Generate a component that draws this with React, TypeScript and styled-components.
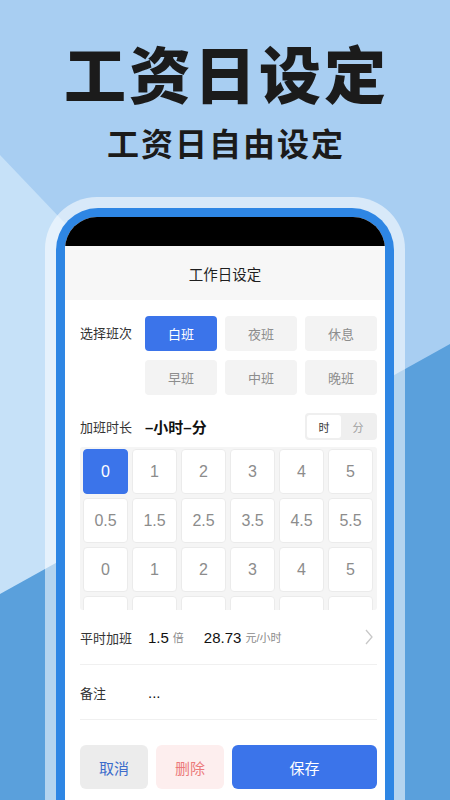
import React, { useState } from 'react';
import styled, { createGlobalStyle } from 'styled-components';

const GlobalStyle = createGlobalStyle`
    html, body {
        margin: 0;
        padding: 0;
    }
    body {
        font-family: "Liberation Sans", "Noto Sans CJK SC", "Noto Sans", sans-serif;
        color: #222;
    }
`;

const BLUE = '#3b74ea';

const Page = styled.div`
    position: relative;
    width: 450px;
    height: 800px;
    overflow: hidden;
    background: #a8cef2;
    display: flex;
    flex-direction: column;
    align-items: center;
`;

const Backdrop = styled.svg`
    position: absolute;
    inset: 0;
`;

const Headline = styled.h1`
    position: relative;
    margin: 40px 0 0 3px;
    font-family: "Noto Sans CJK SC", sans-serif;
    font-size: 62px;
    line-height: 64px;
    font-weight: 900;
    letter-spacing: 3px;
    color: #1b1b1b;
`;

const Tagline = styled.h2`
    position: relative;
    margin: 20px 0 0 2px;
    font-family: "Noto Sans CJK SC", sans-serif;
    font-size: 32px;
    line-height: 36px;
    font-weight: 700;
    letter-spacing: 2px;
    color: #1b1b1b;
`;

const Frame = styled.div`
    position: relative;
    margin-top: 37px;
    width: 360px;
    flex: 1;
    padding: 11px 11px 0;
    box-sizing: border-box;
    background: rgba(255, 255, 255, 0.55);
    border-radius: 52px 52px 0 0;
    display: flex;
`;

const Bezel = styled.div`
    flex: 1;
    min-width: 0;
    padding: 9px 9px 0;
    background: #2e86e4;
    border-radius: 42px 42px 0 0;
    display: flex;
`;

const Screen = styled.div`
    flex: 1;
    min-width: 0;
    background: #fff;
    border-radius: 32px 32px 0 0;
    overflow: hidden;
    display: flex;
    flex-direction: column;
`;

const StatusBar = styled.div`
    height: 29px;
    background: #000;
`;

const NavBar = styled.div`
    height: 54px;
    background: #f7f7f7;
    display: flex;
    align-items: center;
    justify-content: center;
    font-family: "Noto Sans CJK SC", sans-serif;
    font-size: 14.5px;
    color: #1f1f1f;
`;

const Body = styled.div`
    padding: 16px 8px 0 15px;
    display: flex;
    flex-direction: column;
`;

const Label = styled.span<{ $width?: number }>`
    width: ${p => p.$width ?? 65}px;
    flex-shrink: 0;
    font-size: 13px;
    color: #333;
`;

const ShiftGrid = styled.div`
    display: grid;
    grid-template-columns: 57px repeat(3, 72px);
    grid-auto-rows: 35px;
    column-gap: 8px;
    row-gap: 9px;
`;

const ShiftLabel = styled.span`
    grid-row: 1 / 3;
    font-size: 13px;
    line-height: 35px;
    color: #333;
    white-space: nowrap;
`;

const ShiftButton = styled.button<{ $active?: boolean }>`
    border: 0;
    border-radius: 4px;
    padding: 0;
    background: ${p => (p.$active ? BLUE : '#f3f3f3')};
    color: ${p => (p.$active ? '#fff' : '#8d8d8d')};
    font-family: inherit;
    font-size: 13px;
`;

const OvertimeHead = styled.div`
    margin-top: 18px;
    height: 27px;
    display: flex;
    align-items: center;
`;

const Duration = styled.span`
    font-size: 15px;
    font-weight: 700;
    color: #111;
`;

const UnitToggle = styled.div`
    margin-left: auto;
    width: 72px;
    height: 27px;
    padding: 2px;
    box-sizing: border-box;
    border-radius: 4px;
    background: #efefef;
    display: flex;
`;

const UnitOption = styled.span<{ $active?: boolean }>`
    flex: 1;
    display: flex;
    align-items: center;
    justify-content: center;
    border-radius: 3px;
    background: ${p => (p.$active ? '#fff' : 'transparent')};
    color: ${p => (p.$active ? '#333' : '#a0a0a0')};
    font-size: 11px;
`;

const HourGrid = styled.div`
    margin-top: 7px;
    height: 161px;
    overflow: hidden;
    padding: 2px 4px 0 3px;
    background: #f5f5f5;
    border-radius: 3px;
    display: grid;
    grid-template-columns: repeat(6, 45px);
    grid-auto-rows: 45px;
    gap: 4px;
`;

const HourCell = styled.div<{ $active?: boolean }>`
    box-sizing: border-box;
    border: 1px solid ${p => (p.$active ? BLUE : '#ebebeb')};
    border-radius: 4px;
    background: ${p => (p.$active ? BLUE : '#fff')};
    color: ${p => (p.$active ? '#fff' : '#8c8c8c')};
    display: flex;
    align-items: center;
    justify-content: center;
    font-size: 16px;
`;

const InfoRow = styled.div`
    height: 54px;
    display: flex;
    align-items: center;
    border-bottom: 1px solid #f0f0f0;
`;

const Figure = styled.span`
    font-size: 15px;
    font-weight: 500;
    color: #111;
`;

const Unit = styled.span<{ $gap?: number }>`
    margin: 0 ${p => p.$gap ?? 0}px 0 4px;
    font-size: 11px;
    color: #8a8a8a;
`;

const Chevron = styled.svg`
    margin: 0 4px 0 auto;
`;

const Actions = styled.div`
    margin-top: 25px;
    height: 44px;
    display: flex;
    gap: 8px;
`;

const ActionButton = styled.button<{ $tone: 'plain' | 'danger' | 'primary' }>`
    width: ${p => (p.$tone === 'primary' ? 'auto' : '68px')};
    flex: ${p => (p.$tone === 'primary' ? 1 : 'none')};
    border: 0;
    border-radius: 6px;
    font-family: inherit;
    font-size: 15px;
    background: ${p =>
        p.$tone === 'primary' ? BLUE : p.$tone === 'danger' ? '#fdeeee' : '#ececec'};
    color: ${p =>
        p.$tone === 'primary' ? '#fff' : p.$tone === 'danger' ? '#ec7a7a' : '#3d6ccb'};
`;

const SHIFTS = ['白班', '夜班', '休息', '早班', '中班', '晚班'];
const HOURS = ['0', '1', '2', '3', '4', '5', '0.5', '1.5', '2.5', '3.5', '4.5', '5.5'];

export default function App() {
    const [shift, setShift] = useState('白班');
    const [unit, setUnit] = useState<'h' | 'm'>('h');
    const cells = [...HOURS, ...HOURS.slice(0, 6), '', '', '', '', '', ''];

    return (
        <>
            <GlobalStyle />
            <Page>
                <Backdrop width="450" height="800" viewBox="0 0 450 800">
                    <polygon points="0,155 300,470 0,640" fill="#c6e1f8" />
                    <polygon points="0,594 450,344 450,800 0,800" fill="#5aa0dc" />
                </Backdrop>

                <Headline>工资日设定</Headline>
                <Tagline>工资日自由设定</Tagline>

                <Frame>
                    <Bezel>
                        <Screen>
                            <StatusBar />
                            <NavBar>工作日设定</NavBar>
                            <Body>
                                <ShiftGrid>
                                    <ShiftLabel>选择班次</ShiftLabel>
                                    {SHIFTS.map(s => (
                                        <ShiftButton
                                            key={s}
                                            $active={s === shift}
                                            onClick={() => setShift(s)}
                                        >
                                            {s}
                                        </ShiftButton>
                                    ))}
                                </ShiftGrid>

                                <OvertimeHead>
                                    <Label>加班时长</Label>
                                    <Duration>–小时–分</Duration>
                                    <UnitToggle>
                                        <UnitOption $active={unit === 'h'} onClick={() => setUnit('h')}>
                                            时
                                        </UnitOption>
                                        <UnitOption $active={unit === 'm'} onClick={() => setUnit('m')}>
                                            分
                                        </UnitOption>
                                    </UnitToggle>
                                </OvertimeHead>

                                <HourGrid>
                                    {cells.map((v, i) => (
                                        <HourCell key={i} $active={i === 0}>
                                            {v}
                                        </HourCell>
                                    ))}
                                </HourGrid>

                                <InfoRow>
                                    <Label $width={68}>平时加班</Label>
                                    <Figure>1.5</Figure>
                                    <Unit $gap={20}>倍</Unit>
                                    <Figure>28.73</Figure>
                                    <Unit>元/小时</Unit>
                                    <Chevron width="8" height="16" viewBox="0 0 8 16">
                                        <polyline
                                            points="1,1 7,8 1,15"
                                            fill="none"
                                            stroke="#c8c8c8"
                                            strokeWidth="1.3"
                                        />
                                    </Chevron>
                                </InfoRow>

                                <InfoRow>
                                    <Label $width={68}>备注</Label>
                                    <Figure>...</Figure>
                                </InfoRow>

                                <Actions>
                                    <ActionButton $tone="plain">取消</ActionButton>
                                    <ActionButton $tone="danger">删除</ActionButton>
                                    <ActionButton $tone="primary">保存</ActionButton>
                                </Actions>
                            </Body>
                        </Screen>
                    </Bezel>
                </Frame>
            </Page>
        </>
    );
}
